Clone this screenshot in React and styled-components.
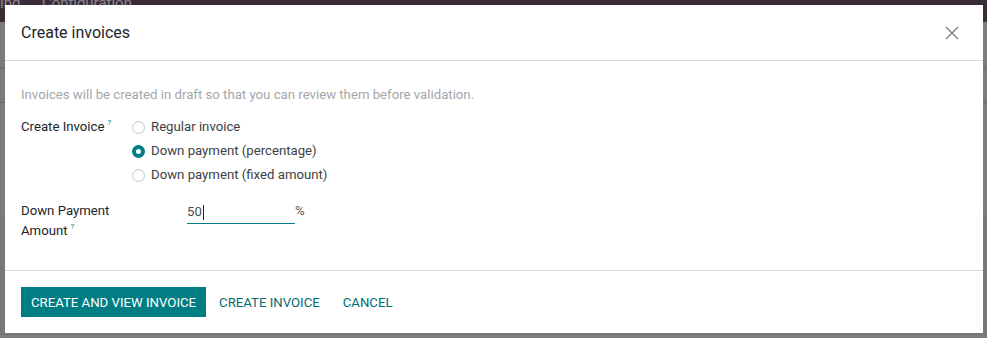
import React from "react";
import styled, { createGlobalStyle } from "styled-components";

const GlobalStyle = createGlobalStyle`
  html, body {
    margin: 0;
    padding: 0;
  }
  body {
    font-family: Roboto, "Noto Sans", sans-serif;
    font-size: 13.2px;
    color: #212529;
  }
`;

const Screen = styled.div`
  position: relative;
  width: 987px;
  height: 338px;
  overflow: hidden;
  background: #7b7b7b;
`;

const NavBar = styled.div`
  height: 22px;
  background: #3a2c37;
  color: #8d8590;
  font-size: 15px;
  display: flex;
  align-items: flex-start;
  line-height: 15px;
  overflow: hidden;
`;

const NavItem = styled.span`
  flex: none;
  width: ${(p) => p.$width}px;
  margin-top: -4px;
  white-space: nowrap;
  text-align: ${(p) => p.$align || "left"};
`;

const SideBand = styled.div`
  margin-top: ${(p) => p.$top}px;
  height: ${(p) => p.$h}px;
  background: ${(p) => p.$bg};
`;

const Dialog = styled.div`
  position: absolute;
  left: 5px;
  top: 5px;
  width: 978px;
  height: 328px;
  background: #fff;
  display: flex;
  flex-direction: column;
`;

const Header = styled.div`
  height: 55px;
  border-bottom: 1px solid #d8dadd;
  display: flex;
  align-items: center;
  justify-content: space-between;
  padding: 0 16px;
`;

const Title = styled.h4`
  margin: 0;
  font-size: 16px;
  font-weight: 400;
  color: #212529;
`;

const CloseButton = styled.button`
  border: 0;
  background: none;
  padding: 0;
  width: 16px;
  height: 16px;
  margin-right: 7px;
  display: flex;
  align-items: center;
  justify-content: center;
  cursor: pointer;
`;

const Body = styled.div`
  flex: 1;
  padding: 24px 16px 0;
`;

const Hint = styled.p`
  margin: 0 0 12px;
  line-height: 20px;
  color: #a3a7ab;
`;

const FieldRow = styled.div`
  display: flex;
  align-items: flex-start;
  margin-top: ${(p) => p.$gap || 0}px;
`;

const Label = styled.label`
  width: ${(p) => p.$width}px;
  flex: none;
  line-height: 20px;
  color: #212529;
`;

const Help = styled.sup`
  color: #017e84;
  font-size: 8px;
  margin-left: 3px;
  vertical-align: top;
  line-height: 12px;
`;

const RadioList = styled.div`
  display: flex;
  flex-direction: column;
  gap: 4px;
`;

const RadioItem = styled.label`
  display: flex;
  align-items: center;
  gap: 6px;
  line-height: 20px;
  color: #3d4145;
`;

const RadioDot = styled.span`
  width: 13px;
  height: 13px;
  box-sizing: border-box;
  border-radius: 50%;
  border: ${(p) => (p.$checked ? "4px solid #017e84" : "1px solid #c4c8cc")};
  background: #fff;
`;

const InputWrap = styled.div`
  display: flex;
  align-items: flex-start;
`;

const Input = styled.div`
  width: 108px;
  height: 22px;
  line-height: 20px;
  border-bottom: 1px solid #017e84;
  color: #4a4e52;
  display: flex;
  align-items: center;
`;

const Caret = styled.span`
  width: 1px;
  height: 15px;
  background: #212529;
  margin-left: 1px;
`;

const Unit = styled.span`
  line-height: 20px;
  color: #5a5e62;
`;

const Footer = styled.div`
  border-top: 1px solid #d8dadd;
  padding: 16px;
  display: flex;
  gap: 3px;
`;

const Button = styled.button`
  height: 30px;
  padding: 0 10px;
  border: 0;
  font-family: inherit;
  font-size: 13.2px;
  text-transform: uppercase;
  cursor: pointer;
  background: ${(p) => (p.$primary ? "#017e84" : "transparent")};
  color: ${(p) => (p.$primary ? "#fff" : "#016b70")};
`;

export default function App() {
  return (
    <>
      <GlobalStyle />
      <Screen>
        <NavBar>
          <NavItem $width={17} $align="right">ing</NavItem>
          <NavItem $width={25} />
          <NavItem $width={120}>Configuration</NavItem>
        </NavBar>
        <SideBand $top={46} $h={1} $bg="#6a6a6a" />
        <SideBand $top={33} $h={1} $bg="#6a6a6a" />
        <SideBand $top={112} $h={120} $bg="#777a74" />

        <Dialog>
          <Header>
            <Title>Create invoices</Title>
            <CloseButton aria-label="Close">
              <svg width="14" height="14" viewBox="0 0 14 14">
                <path d="M1 1L13 13M13 1L1 13" stroke="#7a7d80" strokeWidth="1.4" />
              </svg>
            </CloseButton>
          </Header>
          <Body>
            <Hint>
              Invoices will be created in draft so that you can review them before validation.
            </Hint>
            <FieldRow>
              <Label $width={111}>
                Create Invoice<Help>?</Help>
              </Label>
              <RadioList>
                <RadioItem>
                  <RadioDot />
                  Regular invoice
                </RadioItem>
                <RadioItem>
                  <RadioDot $checked />
                  Down payment (percentage)
                </RadioItem>
                <RadioItem>
                  <RadioDot />
                  Down payment (fixed amount)
                </RadioItem>
              </RadioList>
            </FieldRow>
            <FieldRow $gap={16}>
              <Label $width={166}>
                Down Payment
                <br />
                Amount<Help>?</Help>
              </Label>
              <InputWrap>
                <Input>
                  50
                  <Caret />
                </Input>
                <Unit>%</Unit>
              </InputWrap>
            </FieldRow>
          </Body>
          <Footer>
            <Button $primary>Create and view invoice</Button>
            <Button>Create invoice</Button>
            <Button>Cancel</Button>
          </Footer>
        </Dialog>
      </Screen>
    </>
  );
}
